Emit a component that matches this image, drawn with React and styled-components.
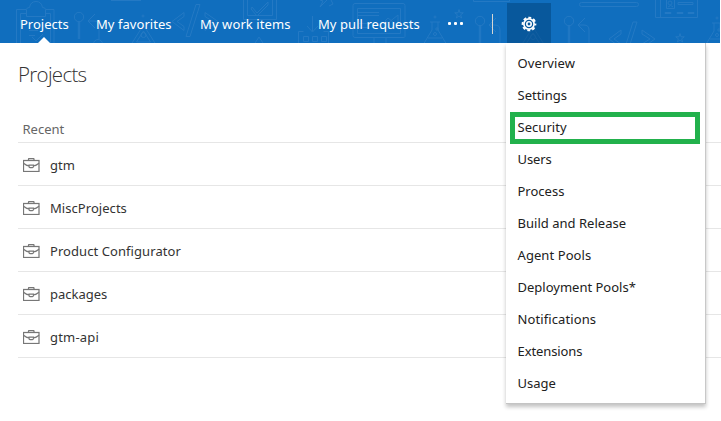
import React from "react";
import styled, { createGlobalStyle } from "styled-components";

const GlobalStyle = createGlobalStyle`
  *, *::before, *::after { box-sizing: border-box; }
  html, body { margin: 0; background: #fff; overflow: hidden; }
  body { font: 13px/20px "Noto Sans", "Open Sans", sans-serif; color: #222; }
`;

const Page = styled.div`
  width: 721px;
  height: 421px;
  overflow: hidden;
  background: #fff;
`;

const Header = styled.header`
  position: relative;
  display: flex;
  align-items: flex-start;
  width: 720px;
  height: 43px;
  padding-left: 20px;
  background: #106ebe;
`;

const Pattern = styled.svg`
  position: absolute;
  inset: 0;
  fill: none;
  stroke: #2f80c8;
  stroke-width: 1;
  opacity: 0.65;
`;

const Nav = styled.nav`
  position: relative;
  display: flex;
  gap: 28px;
  height: 43px;
`;

const NavLink = styled.a`
  position: relative;
  width: ${(p) => p.$width}px;
  padding-top: 14px;
  color: #fff;
  white-space: nowrap;
  letter-spacing: ${(p) => p.$track || 0}px;

  &::after {
    content: "";
    display: ${(p) => (p.$active ? "block" : "none")};
    position: absolute;
    left: 18px;
    bottom: 0;
    border: 6px solid transparent;
    border-top-width: 0;
    border-bottom-color: #fff;
  }
`;

const MoreButton = styled.div`
  position: relative;
  display: flex;
  gap: 3px;
  margin: 22px 0 0 28px;
`;

const Dot = styled.span`
  width: 3px;
  height: 3px;
  border-radius: 1px;
  background: #fff;
`;

const Divider = styled.span`
  position: relative;
  width: 1px;
  height: 20px;
  margin: 14px 0 0 29px;
  background: #d5d6d3;
`;

const SettingsButton = styled.div`
  position: relative;
  display: grid;
  place-items: center;
  width: 44px;
  height: 40px;
  margin: 3px 0 0 14px;
  padding-top: 2px;
  background: rgba(0, 64, 120, 0.47);
`;

const Menu = styled.ul`
  position: absolute;
  top: 43px;
  left: 506px;
  z-index: 2;
  width: 200px;
  height: 361px;
  margin: 0;
  padding: 4px 0;
  list-style: none;
  background: #fff;
  border-right: 1px solid #c8c8c8;
  border-bottom: 1px solid #c4c4c4;
  box-shadow: 0 3px 4px rgba(0, 0, 0, 0.24);
  clip-path: inset(0 -8px -8px -8px);
`;

const MenuItem = styled.li`
  position: relative;
  height: 32px;
  padding: 6px 0 0 11.5px;
  color: #212121;
  letter-spacing: ${(p) => p.$track || 0}px;

  &::after {
    content: "";
    display: ${(p) => (p.$highlighted ? "block" : "none")};
    position: absolute;
    top: 1px;
    left: 4px;
    width: 190px;
    height: 32px;
    border: 5px solid #22b14c;
  }
`;

const Content = styled.main`
  padding: 17px 0 0 18px;
`;

const Title = styled.h1`
  height: 28px;
  margin: 0 0 31px;
  font: 300 20.5px/28px "Open Sans", sans-serif;
  letter-spacing: -0.7px;
  color: #333;
`;

const SectionLabel = styled.div`
  height: 24px;
  padding-left: 4.5px;
  border-bottom: 1px solid #e6e6e6;
  color: #666;
`;

const ProjectRow = styled.div`
  display: flex;
  align-items: center;
  gap: 10px;
  height: 43px;
  padding-left: 5px;
  border-bottom: 1px solid #e6e6e6;
`;

const ProjectName = styled.span`
  padding-top: 2px;
  color: #333;
  letter-spacing: ${(p) => p.$track || 0}px;
`;

const BriefcaseSvg = styled.svg`
  flex: none;
  margin-top: 2px;
  fill: none;
  stroke: #777;
  stroke-width: 1.25;
`;

const GearSvg = styled.svg`
  fill: none;
  stroke: #fff;
`;

const Briefcase = () => (
  <BriefcaseSvg width="17" height="14" viewBox="0 0 17 14">
    <rect x=".5" y="2.5" width="15.500" height="11" />
    <path d="M5.5 2.5V1.2Q5.5.5 6.2.5h4.1q.7 0 .7.7v1.3M.5 5.2Q3.500 7.700 6 7.900M16 5.200Q13 7.700 10.500 7.900M6 7h4.500v1.300q0 1.200-1 1.200H7q-1 0-1-1z" />
  </BriefcaseSvg>
);

const Gear = () => (
  <GearSvg width="16" height="16" viewBox="0 0 16 16">
    <circle cx="8" cy="8" r="5.1" strokeWidth="1.7" />
    <circle cx="8" cy="8" r="6.4" strokeWidth="1.9" strokeDasharray="2.9 2.126" strokeDashoffset="1.45" />
    <circle cx="8" cy="8" r="2.2" strokeWidth="1.6" />
  </GearSvg>
);

const Star = ({ x, y }) => (
  <path transform={`translate(${x} ${y})`} d="M0-4.5 1-1.2H4.3L1.6.8 2.7 4 0 2-2.7 4-1.6.8-4.3-1.2H-1z" />
);

const Flask = ({ x, y }) => (
  <g transform={`translate(${x} ${y})`}>
    <circle cx="0" cy="-5" r="1" />
    <path d="M-5 0H5M-3 0v8l-9 15M3 0v8l9 15M-7 16H7" />
    <circle cx="2" cy="7" r="1.2" />
    <circle cx="0" cy="12" r="1.5" />
  </g>
);

const Branch = ({ x, y }) => (
  <g transform={`translate(${x} ${y})`}>
    <circle r="4.7" />
    <path d="M-.7 5v17M.7 5v17M16-3 9 4l7 7M9 4h6q5 0 5 5v13" />
  </g>
);

const CodeTag = ({ x, y }) => (
  <path
    transform={`translate(${x} ${y})`}
    d="M-11-9-23 0-11 9V5L-18 0-11-5zM10-9 23 0 10 9V5L18 0 10-5zM1-17H5L-5 15H-9z"
  />
);

const Compass = ({ x, y }) => (
  <g transform={`translate(${x} ${y})`}>
    <path d="M0 0-14 22M0 0 14 22M0 6-7 17H7z" />
    <circle cy="10" r="2.5" />
  </g>
);

const HeaderPattern = () => (
  <Pattern width="720" height="43" viewBox="0 0 720 43">
    <path d="M26 9.5H16.5V43M46 9.5h8V43M26 13.5h-5.5V43M46 13.5h4.5V43M26.500 16.500v-7q0-2 3-2 1-6 6.500-6t6.500 6q3 0 3 2v7zM29 30.500h9M29 35.500h6M32 37l4 4 7-7M111 .5h30" />
    <Branch x={79} y={17} />
    <circle cx="98" cy="44" r="4.500" />
    <circle cx="143" cy="16" r="1" />
    <Compass x={143.500} y={25} />
    <CodeTag x={195} y={21.500} />
    <path d="M243.500 0v19.500h33V0M247.500 0v15.500h25V0M252 7l5 6 11-11v3L257 16l-6-7zM255 43l4-6 4 6M320 0l3 1-3 6 7-7M331 0l2 4-4 2" />
    <path d="M312.500 16v15M307 26l5.500 6 5.500-6M298.500 43V31.500h5M328.500 43V31.500h-5M303.500 36.500h5v5h-5zM312.500 36.500h5v5h-5zM321.500 36.500h5v5h-5z" />
    <path d="M355 3.500h48q2 0 2 2v31q0 1-2 1h-48q-2 0-2-2v-30q0-2 2-2zM357.500 8.500h43v25h-43zM358 12.500h21M358 15.500h21M359 23.500h15M359 27.500h10M388 18l10 8V15l-10 8-3-2 3-3M374 38v5M386 38v5" />
    <Flask x={435} y={22} />
    <Star x={459} y={14} />
    <path d="M473.500 0v1.500h36V0" />
    <Branch x={480} y={21} />
    <Compass x={533} y={27} />
    <Branch x={569} y={21} />
    <rect x="579.500" y="2.500" width="59" height="4" rx="2" />
    <CodeTag x={632} y={39} />
    <path d="M655.500 0v17.500h42V0M660.500 0v17M666.500 0v8.500h8V0M668 7q3-3 5 0M678 2.500h15v2h-15zM665 12.500h6v1h-6zM677 12.500h6v1h-6zM688 12.500h6v1h-6z" />
    <circle cx="670" cy="3" r="2" />
    <Star x={680} y={38} />
    <Flask x={717} y={23} />
  </Pattern>
);

const navLinks = [
  { label: "Projects", width: 48, active: true },
  { label: "My favorites", width: 76, track: 0.05 },
  { label: "My work items", width: 90, track: 0.1 },
  { label: "My pull requests", width: 102, track: 0.06 },
];

const projects = [
  { name: "gtm" },
  { name: "MiscProjects", track: 0.05 },
  { name: "Product Configurator", track: 0.07 },
  { name: "packages" },
  { name: "gtm-api", track: 0.2 },
];

const menuItems = [
  { label: "Overview", track: 0.1 },
  { label: "Settings" },
  { label: "Security", track: 0.05, highlighted: true },
  { label: "Users", track: -0.1 },
  { label: "Process" },
  { label: "Build and Release", track: 0.02 },
  { label: "Agent Pools", track: 0.08 },
  { label: "Deployment Pools*" },
  { label: "Notifications", track: 0.1 },
  { label: "Extensions", track: -0.1 },
  { label: "Usage" },
];

export default function App() {
  return (
    <Page>
      <GlobalStyle />
      <Header>
        <HeaderPattern />
        <Nav>
          {navLinks.map((l) => (
            <NavLink key={l.label} $width={l.width} $track={l.track} $active={l.active}>
              {l.label}
            </NavLink>
          ))}
        </Nav>
        <MoreButton aria-label="More">
          <Dot />
          <Dot />
          <Dot />
        </MoreButton>
        <Divider />
        <SettingsButton aria-label="Settings menu">
          <Gear />
        </SettingsButton>
      </Header>
      <Menu>
        {menuItems.map((m) => (
          <MenuItem key={m.label} $track={m.track} $highlighted={m.highlighted}>
            {m.label}
          </MenuItem>
        ))}
      </Menu>
      <Content>
        <Title>Projects</Title>
        <SectionLabel>Recent</SectionLabel>
        {projects.map((p) => (
          <ProjectRow key={p.name}>
            <Briefcase />
            <ProjectName $track={p.track}>{p.name}</ProjectName>
          </ProjectRow>
        ))}
      </Content>
    </Page>
  );
}
